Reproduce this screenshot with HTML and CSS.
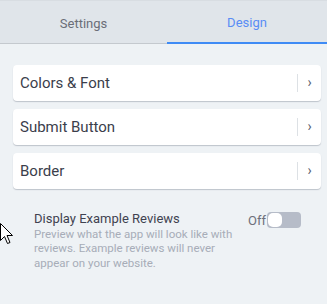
FILE: index.html
```html
<!DOCTYPE html>
<html>
<head>
  <title>Design</title>
  <link rel="stylesheet" href="styles.css">
</head>
<body>
  <div class="panel">
    <div class="tabs">
      <div class="tab">Settings</div>
      <div class="tab active">Design</div>
    </div>

    <div class="content">
      <div class="menu-item">
        <span class="label">Colors &amp; Font</span>
        <span class="arrow">&#8250;</span>
      </div>
      <div class="menu-item">
        <span class="label">Submit Button</span>
        <span class="arrow">&#8250;</span>
      </div>
      <div class="menu-item">
        <span class="label">Border</span>
        <span class="arrow">&#8250;</span>
      </div>

      <div class="option">
        <div class="option-text">
          <div class="option-title">Display Example Reviews</div>
          <div class="option-desc">Preview what the app will look like with reviews. Example reviews will never appear on your website.</div>
        </div>
        <div class="toggle-wrap">
          <span class="toggle-label">Off</span>
          <div class="toggle"><div class="knob"></div></div>
        </div>
      </div>
    </div>
  </div>

  <!-- mouse pointer -->
  <svg class="cursor" width="13" height="22" viewBox="0 0 13 22">
    <path d="M0.5 0.5v17l4-4 3 7 2.5-1-3-7h5.5z" fill="white" stroke="black" stroke-width="1"/>
  </svg>
</body>
</html>
```

FILE: styles.css
```css
body {
  margin: 0;
  background: #eef2f5;
  font-family: Roboto, 'Liberation Sans', sans-serif;
  color: #3b3e4b;
  overflow: hidden;
}

.panel {
  width: 327px;
  height: 304px;
}

.tabs {
  display: flex;
  height: 42px;
  background: #e0e5ea;
  border-top: 1px solid #d8dde2;
  border-bottom: 1px solid #c4c9ce;
}

.tab {
  flex: 1;
  display: flex;
  align-items: center;
  justify-content: center;
  font-size: 13px;
  color: #6b6e78;
  padding-top: 2px;
}

.tab:first-child {
  flex: 0 0 167px;
}

.tab.active {
  color: #5a8df5;
  border-bottom: 2px solid #3f8bf5;
  margin-bottom: -1px;
}

.content {
  padding: 21px 6px 0 13px;
  display: flex;
  flex-direction: column;
  gap: 8px;
}

.menu-item {
  height: 36px;
  background: white;
  border-radius: 4px;
  box-shadow: 0 1px 1px rgba(100, 110, 125, 0.35);
  display: flex;
  align-items: center;
  padding-left: 7px;
}

.label {
  flex: 1;
  font-size: 15px;
}

.arrow {
  width: 24px;
  height: 18px;
  border-left: 1px solid #dde1e5;
  display: flex;
  align-items: center;
  justify-content: center;
  color: #5b6070;
  font-size: 14px;
  padding-bottom: 2px;
  box-sizing: border-box;
}

.option {
  display: flex;
  align-items: flex-start;
  padding: 14px 20px 0 21px;
}

.option-text {
  flex: 1;
}

.option-title {
  font-size: 13px;
  color: #3f4250;
  margin-bottom: 1px;
}

.option-desc {
  font-size: 11.5px;
  line-height: 14.3px;
  color: #a7adb8;
  width: 205px;
}

.toggle-wrap {
  display: flex;
  align-items: center;
  gap: 1px;
  margin-top: 1px;
}

.toggle-label {
  font-size: 13px;
  color: #6d707a;
}

.toggle {
  width: 34px;
  height: 16px;
  background: #b6bcc8;
  border-radius: 4px;
  position: relative;
}

.knob {
  position: absolute;
  left: 1px;
  top: 1px;
  width: 14px;
  height: 14px;
  background: white;
  border-radius: 5px;
}

.cursor {
  position: absolute;
  left: 0;
  top: 223px;
}
```
